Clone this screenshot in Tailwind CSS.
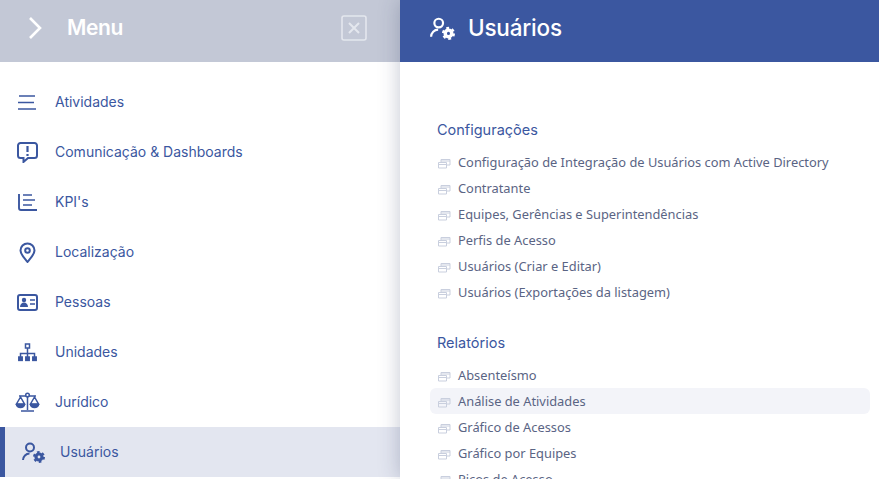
<!DOCTYPE html>
<html lang="en">
<head>
    <meta charset="UTF-8">
    <title>Usuários</title>
    <script src="https://cdn.jsdelivr.net/npm/@tailwindcss/browser@4"></script>
</head>
<body class="bg-white overflow-hidden">
<div class="flex w-[879px] h-[479px] overflow-hidden">

    <aside class="w-[400px] h-full shrink-0 flex flex-col bg-white">
        <div class="h-[62px] shrink-0 bg-[#c3c8d6] flex items-center pb-[6px] pl-[27px] pr-[33px]">
            <svg class="w-[17px] h-[24px]" viewBox="0 0 17 24" fill="none" stroke="#fff" stroke-width="2.6"><path d="M3 2l10 10L3 22"/></svg>
            <span class="ml-[23px] text-[21px] font-semibold text-white font-['Inter',sans-serif] tracking-[-0.4px]">Menu</span>
            <svg class="ml-auto w-[26px] h-[26px]" viewBox="0 0 26 26" fill="none" stroke="#e4e7ee"><rect x="1" y="1" width="24" height="24" rx="2" stroke-width="1.6"/><path d="M8 8l10 10M18 8L8 18" stroke-width="2"/></svg>
        </div>

        <nav class="pt-[15px] flex flex-col text-[#3b57a0] text-[14px] font-['Inter',sans-serif]">
            <a class="h-[50px] flex items-center pl-[17px] gap-[17px]">
                <svg class="w-[21px] h-[21px]" viewBox="0 0 21 21" fill="none" stroke="#3b57a0" stroke-width="1.6"><path d="M2 4h16M1 10.500h16M1 17h18"/></svg>
                <span class="pb-[2px]">Atividades</span>
            </a>
            <a class="h-[50px] flex items-center pl-[17px] gap-[17px]">
                <svg class="w-[21px] h-[21px]" viewBox="0 0 21 21" fill="none" stroke="#3b57a0" stroke-width="2"><path d="M3.500 1h14a2.500 2.500 0 0 1 2.500 2.500v10a2.500 2.500 0 0 1-2.500 2.500H11l-4.500 4v-4h-3A2.500 2.500 0 0 1 1 13.500v-10A2.500 2.500 0 0 1 3.500 1z"/><path d="M10.500 4v6M10.500 12v2" stroke-width="2.200"/></svg>
                <span class="pb-[2px]">Comunicação &amp; Dashboards</span>
            </a>
            <a class="h-[50px] flex items-center pl-[17px] gap-[17px]">
                <svg class="w-[21px] h-[21px]" viewBox="0 0 21 21" fill="none" stroke="#3b57a0" stroke-width="1.9"><path d="M2 2v14a2 2 0 0 0 2 2h16"/><path d="M6 3h9M6 8h12M6 13h9" stroke-width="1.500"/></svg>
                <span class="pb-[2px]">KPI's</span>
            </a>
            <a class="h-[50px] flex items-center pl-[17px] gap-[17px]">
                <svg class="w-[21px] h-[21px]" viewBox="0 0 21 21" fill="none" stroke="#3b57a0" stroke-width="2"><path d="M10.500 20c-3-4-7-7.500-7-11.500a7 7 0 0 1 14 0c0 4-4 7.500-7 11.500z"/><circle cx="10.500" cy="8.500" r="2.300"/></svg>
                <span class="pb-[2px]">Localização</span>
            </a>
            <a class="h-[50px] flex items-center pl-[17px] gap-[17px]">
                <svg class="w-[21px] h-[21px]" viewBox="0 0 21 21" fill="none" stroke="#3b57a0" stroke-width="2"><rect x="1" y="3" width="19" height="15" rx="2"/><circle cx="7" cy="8" r="2.200" fill="#3b57a0" stroke="none"/><path d="M3 15c0-6 8-6 8 0z" fill="#3b57a0" stroke="none"/><path d="M13 8h5M13 12h5" stroke-width="1.600"/></svg>
                <span class="pb-[2px]">Pessoas</span>
            </a>
            <a class="h-[50px] flex items-center pl-[17px] gap-[17px]">
                <svg class="w-[21px] h-[21px]" viewBox="0 0 21 21" fill="none" stroke="#3b57a0" stroke-width="1.500"><rect x="8.500" y="2" width="4" height="4" fill="#fff"/><path d="M10.500 6v9M3.500 15v-3.500h14V15"/><rect x="1.800" y="15" width="3.400" height="3.400" fill="#3b57a0"/><rect x="8.800" y="15" width="3.400" height="3.400" fill="#3b57a0"/><rect x="15.800" y="15" width="3.400" height="3.400" fill="#3b57a0"/></svg>
                <span class="pb-[2px]">Unidades</span>
            </a>
            <a class="h-[50px] flex items-center pl-[15px] gap-[15px]">
                <svg class="w-[25px] h-[21px]" viewBox="0 0 25 21" fill="none" stroke="#3b57a0" stroke-width="1.500"><path d="M4 4h17M12.500 5v13M6 19h13"/><circle cx="12.500" cy="3" r="1.800" fill="#fff"/><path d="M5.500 5L1.500 12h8zM19.500 5l-4 7h8z"/><path d="M1.500 12.500a4 3 0 0 0 8 0zM15.500 12.500a4 3 0 0 0 8 0z" fill="#3b57a0"/></svg>
                <span class="pb-[2px]">Jurídico</span>
            </a>
            <a class="h-[50px] flex items-center pl-[17px] gap-[15px] bg-[#e3e6f0] border-l-[5px] border-[#3b57a0]">
                <svg class="w-[23px] h-[21px]" viewBox="0 0 23 21" fill="none" stroke="#3b57a0" stroke-width="2"><circle cx="8" cy="5.500" r="4"/><path d="M1 18c0-3.500 3-6.500 6.500-6.500"/><circle cx="17" cy="15" r="3" stroke-width="3.200"/><circle cx="17" cy="15" r="5" stroke-width="2" stroke-dasharray="2.600 2.630"/></svg>
                <span class="pb-[2px]">Usuários</span>
            </a>
        </nav>
    </aside>

    <main class="flex-1 h-full flex flex-col shadow-[0_0_20px_rgba(40,50,90,0.28)] z-10 bg-white">
        <header class="h-[62px] shrink-0 bg-[#3b57a0] flex items-center pb-[6px] pl-[30px] text-white">
            <svg class="w-[25px] h-[23px]" viewBox="0 0 23 21" fill="none" stroke="#fff" stroke-width="2"><circle cx="8" cy="5.500" r="4"/><path d="M1 18c0-3.500 3-6.500 6.500-6.500"/><circle cx="17" cy="15" r="3" stroke-width="3.200"/><circle cx="17" cy="15" r="5" stroke-width="2" stroke-dasharray="2.600 2.630"/></svg>
            <h1 class="ml-[13px] text-[22.500px] font-medium tracking-[-0.2px] font-['Inter',sans-serif]">Usuários</h1>
        </header>

        <div class="pl-[30px] pr-[9px] pt-[57px] text-[12.850px] text-[#5a6484] font-['Noto_Sans',sans-serif]">
            <h2 class="pl-[7px] mb-[9px] text-[14.5px] leading-[22px] text-[#3b57a0] font-['Inter',sans-serif]">Configurações</h2>
            <ul class="flex flex-col">
                <li class="h-[26px] flex items-center pl-[7px] gap-[7px] rounded"><svg class="w-[14px] h-[12px]" viewBox="0 0 14 12" fill="none" stroke="#c9cfde"><path d="M1.500 5.500h8v5.500h-8zM1.500 7.500h8M4 5.500V2.500h9v5.500h-3.500M4 4h9"/></svg>Configuração de Integração de Usuários com Active Directory</li>
                <li class="h-[26px] flex items-center pl-[7px] gap-[7px] rounded"><svg class="w-[14px] h-[12px]" viewBox="0 0 14 12" fill="none" stroke="#c9cfde"><path d="M1.500 5.500h8v5.500h-8zM1.500 7.500h8M4 5.500V2.500h9v5.500h-3.500M4 4h9"/></svg>Contratante</li>
                <li class="h-[26px] flex items-center pl-[7px] gap-[7px] rounded"><svg class="w-[14px] h-[12px]" viewBox="0 0 14 12" fill="none" stroke="#c9cfde"><path d="M1.500 5.500h8v5.500h-8zM1.500 7.500h8M4 5.500V2.500h9v5.500h-3.500M4 4h9"/></svg>Equipes, Gerências e Superintendências</li>
                <li class="h-[26px] flex items-center pl-[7px] gap-[7px] rounded"><svg class="w-[14px] h-[12px]" viewBox="0 0 14 12" fill="none" stroke="#c9cfde"><path d="M1.500 5.500h8v5.500h-8zM1.500 7.500h8M4 5.500V2.500h9v5.500h-3.500M4 4h9"/></svg>Perfis de Acesso</li>
                <li class="h-[26px] flex items-center pl-[7px] gap-[7px] rounded"><svg class="w-[14px] h-[12px]" viewBox="0 0 14 12" fill="none" stroke="#c9cfde"><path d="M1.500 5.500h8v5.500h-8zM1.500 7.500h8M4 5.500V2.500h9v5.500h-3.500M4 4h9"/></svg>Usuários (Criar e Editar)</li>
                <li class="h-[26px] flex items-center pl-[7px] gap-[7px] rounded"><svg class="w-[14px] h-[12px]" viewBox="0 0 14 12" fill="none" stroke="#c9cfde"><path d="M1.500 5.500h8v5.500h-8zM1.500 7.500h8M4 5.500V2.500h9v5.500h-3.500M4 4h9"/></svg>Usuários (Exportações da listagem)</li>
            </ul>
            <h2 class="pl-[7px] mt-[26px] mb-[8px] text-[14.5px] leading-[22px] text-[#3b57a0] font-['Inter',sans-serif]">Relatórios</h2>
            <ul class="flex flex-col">
                <li class="h-[26px] flex items-center pl-[7px] pt-[2px] gap-[7px] rounded"><svg class="w-[14px] h-[12px]" viewBox="0 0 14 12" fill="none" stroke="#c9cfde"><path d="M1.500 5.500h8v5.500h-8zM1.500 7.500h8M4 5.500V2.500h9v5.500h-3.500M4 4h9"/></svg>Absenteísmo</li>
                <li class="h-[26px] flex items-center pl-[7px] pt-[2px] gap-[7px] rounded-md bg-[#f3f4f9]"><svg class="w-[14px] h-[12px]" viewBox="0 0 14 12" fill="none" stroke="#c9cfde"><path d="M1.500 5.500h8v5.500h-8zM1.500 7.500h8M4 5.500V2.500h9v5.500h-3.500M4 4h9"/></svg>Análise de Atividades</li>
                <li class="h-[26px] flex items-center pl-[7px] pt-[2px] gap-[7px] rounded"><svg class="w-[14px] h-[12px]" viewBox="0 0 14 12" fill="none" stroke="#c9cfde"><path d="M1.500 5.500h8v5.500h-8zM1.500 7.500h8M4 5.500V2.500h9v5.500h-3.500M4 4h9"/></svg>Gráfico de Acessos</li>
                <li class="h-[26px] flex items-center pl-[7px] pt-[2px] gap-[7px] rounded"><svg class="w-[14px] h-[12px]" viewBox="0 0 14 12" fill="none" stroke="#c9cfde"><path d="M1.500 5.500h8v5.500h-8zM1.500 7.500h8M4 5.500V2.500h9v5.500h-3.500M4 4h9"/></svg>Gráfico por Equipes</li>
                <li class="h-[26px] flex items-center pl-[7px] pt-[2px] gap-[7px] rounded"><svg class="w-[14px] h-[12px]" viewBox="0 0 14 12" fill="none" stroke="#c9cfde"><path d="M1.500 5.500h8v5.500h-8zM1.500 7.500h8M4 5.500V2.500h9v5.500h-3.500M4 4h9"/></svg>Picos de Acesso</li>
            </ul>
        </div>
    </main>
</div>
</body>
</html>
